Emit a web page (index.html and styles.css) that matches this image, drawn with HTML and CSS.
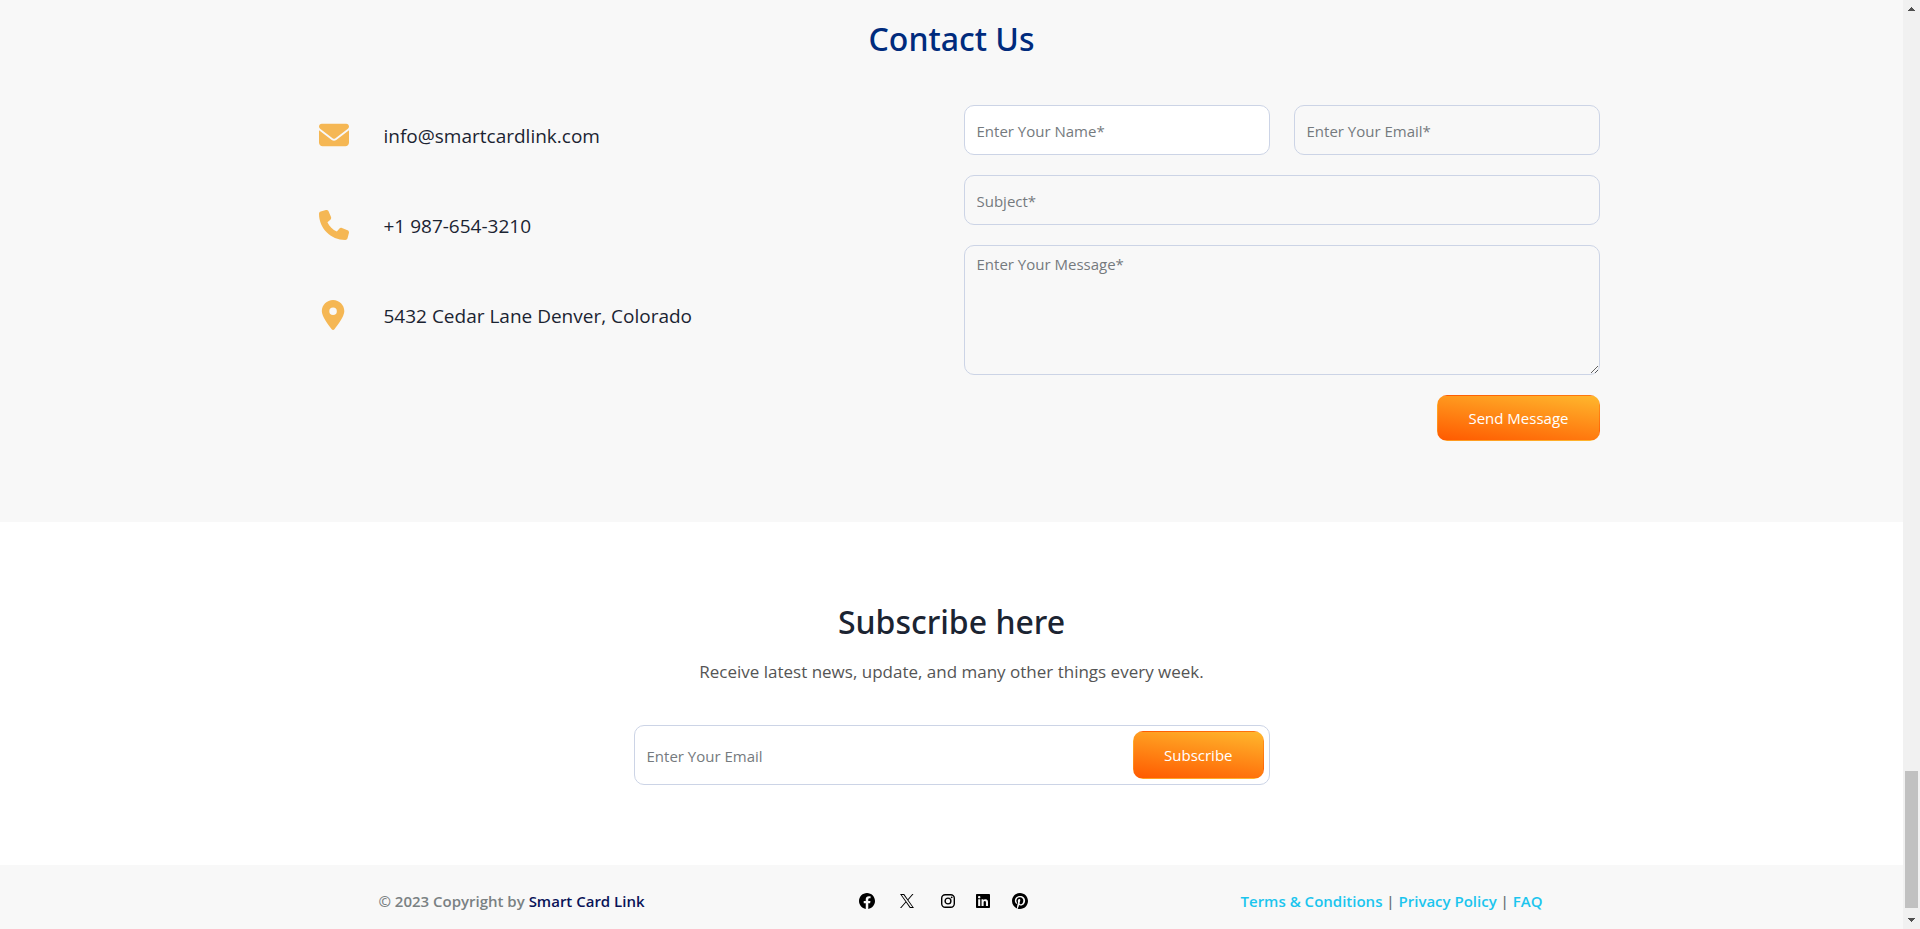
FILE: index.html
```
<!DOCTYPE html>
<html lang="en">
<head>
<meta charset="utf-8">
<meta name="viewport" content="width=device-width, initial-scale=1">
<title>Smart Card Link</title>
<link rel="stylesheet" href="styles.css">
</head>
<body>
<div class="page">
  <main>
    <section class="contact">
      <h2 class="section-title contact-title">Contact Us</h2>
      <div class="container contact-grid">
        <ul class="contact-list">
          <li class="contact-item">
            <svg class="contact-icon" viewBox="0 0 512 512" aria-hidden="true"><path d="M48 64C21.500 64 0 85.500 0 112c0 15.100 7.100 29.300 19.200 38.400L236.800 313.600c11.400 8.500 27 8.500 38.400 0L492.800 150.400c12.100-9.100 19.200-23.300 19.200-38.400c0-26.500-21.500-48-48-48H48zM0 176V384c0 35.300 28.700 64 64 64H448c35.300 0 64-28.700 64-64V176L294.400 339.200c-22.800 17.100-54 17.100-76.800 0L0 176z"/></svg>
            <a class="contact-link" href="#email">info@smartcardlink.com</a>
          </li>
          <li class="contact-item">
            <svg class="contact-icon" viewBox="0 0 512 512" aria-hidden="true"><path d="M164.900 24.600c-7.700-18.600-28-28.500-47.400-23.200l-88 24C12.100 30.200 0 46 0 64C0 311.400 200.600 512 448 512c18 0 33.800-12.100 38.600-29.500l24-88c5.300-19.400-4.600-39.700-23.200-47.400l-96-40c-16.300-6.800-35.200-2.100-46.300 11.600L304.700 368C234.300 334.700 177.300 277.700 144 207.300L193.300 167c13.700-11.200 18.400-30 11.600-46.300l-40-96z"/></svg>
            <a class="contact-link" href="#phone">+1 987-654-3210</a>
          </li>
          <li class="contact-item">
            <svg class="contact-icon" viewBox="-48 0 512 512" aria-hidden="true"><path d="M215.700 499.200C267 435 384 279.400 384 192C384 86 298 0 192 0S0 86 0 192c0 87.400 117 243 168.300 307.200c12.300 15.300 35.100 15.300 47.400 0zM192 128a64 64 0 1 1 0 128 64 64 0 1 1 0-128z"/></svg>
            <span class="contact-link">5432 Cedar Lane Denver, Colorado</span>
          </li>
        </ul>
        <form class="contact-form">
          <div class="field-row">
            <input class="field field-filled" type="text" aria-label="Your name" placeholder="Enter Your Name*">
            <input class="field" type="email" aria-label="Your email" placeholder="Enter Your Email*">
          </div>
          <input class="field" type="text" aria-label="Subject" placeholder="Subject*">
          <textarea class="field field-message" aria-label="Your message" placeholder="Enter Your Message*"></textarea>
          <button class="button send" type="button">Send Message</button>
        </form>
      </div>
    </section>
    <section class="subscribe">
      <h2 class="section-title">Subscribe here</h2>
      <p class="subscribe-text">Receive latest news, update, and many other things every week.</p>
      <form class="subscribe-form">
        <input class="subscribe-input" type="email" aria-label="Email for newsletter" placeholder="Enter Your Email">
        <button class="button" type="button">Subscribe</button>
      </form>
    </section>
  </main>
  <footer class="footer">
    <div class="container footer-grid">
      <p class="copyright">© 2023 Copyright by <a class="brand" href="#home">Smart Card Link</a></p>
      <nav class="social" aria-label="Social media">
        <a class="social-link" href="#facebook" aria-label="Facebook"><svg viewBox="8 8 496 496" width="16" height="16"><path d="M504 256C504 119 393 8 256 8S8 119 8 256c0 123.780 90.690 226.380 209.250 245V327.690h-63V256h63v-54.640c0-62.150 37-96.480 93.670-96.480 27.140 0 55.520 4.840 55.520 4.840v61h-31.280c-30.800 0-40.410 19.120-40.410 38.730V256h68.780l-11 71.690h-57.780V501C413.310 482.380 504 379.780 504 256z"/></svg></a>
        <a class="social-link" href="#x" aria-label="X"><svg viewBox="0 0 300 301" width="14" height="14"><path d="M178.570 127.150 290.270 0h-26.460l-97.030 110.380L89.340 0H0l117.130 166.930L0 300.250h26.460l102.400-116.590 81.800 116.590H300M36.010 19.540H76.660l187.130 262.130h-40.660"/></svg></a>
        <a class="social-link instagram" href="#instagram" aria-label="Instagram"><svg viewBox="0 0 14 14" width="14" height="14"><rect x=".7" y=".7" width="12.600" height="12.600" rx="3.500" fill="none" stroke="#000" stroke-width="1.400"/><circle cx="7" cy="7" r="2.900" fill="none" stroke="#000" stroke-width="1.400"/><circle cx="10.700" cy="3.300" r=".9"/></svg></a>
        <a class="social-link linkedin" href="#linkedin" aria-label="LinkedIn"><svg viewBox="0 32 448 448" width="14" height="14"><path d="M416 32H31.900C14.300 32 0 46.500 0 64.300v383.400C0 465.500 14.300 480 31.900 480H416c17.600 0 32-14.500 32-32.300V64.300c0-17.800-14.400-32.300-32-32.300zM135.400 416H69V202.200h66.500V416zm-33.200-243c-21.300 0-38.500-17.300-38.500-38.500S80.900 96 102.200 96c21.200 0 38.500 17.300 38.500 38.500 0 21.300-17.200 38.500-38.500 38.500zm282.100 243h-66.400V312c0-24.800-.5-56.700-34.500-56.700-34.600 0-39.900 27-39.900 54.900V416h-66.400V202.200h63.700v29.200h.9c8.900-16.800 30.600-34.500 62.900-34.500 67.200 0 79.700 44.300 79.700 101.900V416z"/></svg></a>
        <a class="social-link" href="#pinterest" aria-label="Pinterest"><svg viewBox="0 8 496 496" width="16" height="16"><path d="M496 256c0 137-111 248-248 248-25.600 0-50.200-3.900-73.400-11.100 10.100-16.500 25.200-43.500 30.800-65 3-11.600 15.400-59 15.400-59 8.100 15.400 31.700 28.500 56.800 28.500 74.800 0 128.700-68.800 128.700-154.300 0-81.900-66.900-143.200-152.900-143.200-107 0-163.900 71.800-163.900 150.100 0 36.400 19.400 81.700 50.300 96.100 4.700 2.200 7.200 1.200 8.300-3.300.8-3.400 5-20.300 6.900-28.100.6-2.500.3-4.700-1.700-7.100-10.100-12.500-18.300-35.300-18.300-56.600 0-54.700 41.400-107.600 112-107.600 60.900 0 103.600 41.500 103.600 100.900 0 67.100-33.900 113.600-78 113.600-24.300 0-42.600-20.100-36.700-44.800 7-29.500 20.500-61.300 20.500-82.600 0-19-10.200-34.900-31.400-34.900-24.900 0-44.900 25.700-44.900 60.200 0 22 7.400 36.800 7.400 36.800s-24.500 103.800-29 123.200c-5 21.400-3 51.600-.9 71.200C65.400 450.900 0 361.100 0 256 0 119 111 8 248 8s248 111 248 248z"/></svg></a>
      </nav>
      <p class="legal"><a href="#terms">Terms &amp; Conditions</a> | <a href="#privacy">Privacy Policy</a> | <a href="#faq">FAQ</a></p>
    </div>
  </footer>
</div>
<div class="scrollbar" aria-hidden="true">
  <svg class="scroll-arrow" viewBox="0 0 17 17" shape-rendering="crispEdges"><path d="M5 11V10H6V9H7V8H8V7H9V8H10V9H11V10H12V11Z"/></svg>
  <div class="scroll-thumb"></div>
  <svg class="scroll-arrow" viewBox="0 0 17 17" shape-rendering="crispEdges"><path d="M5 6V7H6V8H7V9H8V10H9V9H10V8H11V7H12V6Z"/></svg>
</div>
</body>
</html>
```
FILE: styles.css
```
* {
  box-sizing: border-box;
}

body {
  margin: 0;
  min-height: 100vh;
  display: flex;
  font-family: "Open Sans", "Noto Sans", sans-serif;
  font-size: 16px;
  line-height: 24px;
  color: #1b2432;
  background: #fff;
}

h2,
p,
ul {
  margin: 0;
  padding: 0;
}

a {
  color: inherit;
  text-decoration: none;
}

input,
textarea,
button {
  font: inherit;
}

.page {
  flex: 1;
  min-width: 0;
  display: flex;
  flex-direction: column;
}

.container {
  width: 100%;
  max-width: 1320px;
  margin: 0 auto;
  padding: 0 12px;
}

.section-title {
  font-family: "Noto Sans", "Open Sans", sans-serif;
  font-size: 32px;
  line-height: 42px;
  font-weight: 500;
  text-align: center;
}

.contact {
  padding: 18px 0 81px;
  background: #f8f8f8;
}

.contact-title {
  margin-bottom: 45px;
  color: #002b7d;
}

.contact-grid {
  display: grid;
  grid-template-columns: 1fr 1fr;
  gap: 24px;
}

.contact-list {
  list-style: none;
  padding: 15px;
  display: flex;
  flex-direction: column;
  gap: 60px;
}

.contact-item {
  display: flex;
  align-items: center;
  gap: 35px;
}

.contact-icon {
  flex: none;
  width: 30px;
  height: 30px;
  fill: #f5b754;
}

.contact-link {
  font-size: 19px;
  line-height: 28px;
  padding-top: 2px;
}

.contact-form {
  display: flex;
  flex-direction: column;
  gap: 20px;
}

.field-row {
  display: grid;
  grid-template-columns: 1fr 1fr;
  gap: 24px;
}

.field {
  display: block;
  width: 100%;
  height: 50px;
  padding: 2px 12px 0;
  font-size: 15px;
  color: #1b2432;
  background: transparent;
  border: 1px solid #ccd4e6;
  border-radius: 10px;
}

.field-filled {
  background: #fff;
}

.field-message {
  height: 130px;
  padding-top: 6px;
}

.field::placeholder,
.subscribe-input::placeholder {
  color: #757a7e;
  opacity: 1;
}

.button {
  padding: 10px 30px;
  font-size: 15px;
  color: #fff;
  background: linear-gradient(8deg, #ff5a00, #ffb72d);
  border: 1px solid transparent;
  border-radius: 10px;
}

.send {
  align-self: flex-end;
}

.subscribe {
  padding: 79px 12px 80px;
  display: flex;
  flex-direction: column;
  align-items: center;
}

.subscribe-text {
  margin: 15px 0 40px;
  font-size: 17px;
  line-height: 27px;
  color: #555;
}

.subscribe-form {
  display: flex;
  width: 100%;
  max-width: 636px;
  height: 60px;
  padding: 5px;
  border: 1px solid #ccd4e6;
  border-radius: 10px;
}

.subscribe-input {
  flex: 1;
  min-width: 0;
  padding: 2px 7px 0;
  font-size: 15px;
  background: transparent;
  border: 0;
}

.footer {
  flex: 1;
  padding: 24px 0 15px;
  background: #f8f8f8;
}

.footer-grid {
  display: grid;
  grid-template-columns: repeat(3, 1fr);
  padding: 0;
  font-size: 15px;
  font-weight: 600;
  text-align: center;
}

.copyright {
  color: #7a8183;
}

.brand {
  color: #0a1458;
}

.social {
  display: flex;
  align-items: center;
  justify-content: center;
  gap: 25px;
  padding-right: 16px;
}

.social-link {
  display: flex;
}

.instagram {
  margin-left: 2px;
}

.linkedin {
  margin: 0 -3px 0 -4px;
}

.legal {
  color: #6c7378;
}

.legal a {
  color: #1bc5ee;
}

.scrollbar {
  position: sticky;
  top: 0;
  flex: none;
  display: flex;
  flex-direction: column;
  width: 17px;
  height: 100vh;
  background: #f1f1f1;
}

.scroll-arrow {
  width: 17px;
  height: 17px;
  fill: #505050;
}

.scroll-thumb {
  height: 137px;
  margin: auto 2px 4px;
  background: #c1c1c1;
}
```
